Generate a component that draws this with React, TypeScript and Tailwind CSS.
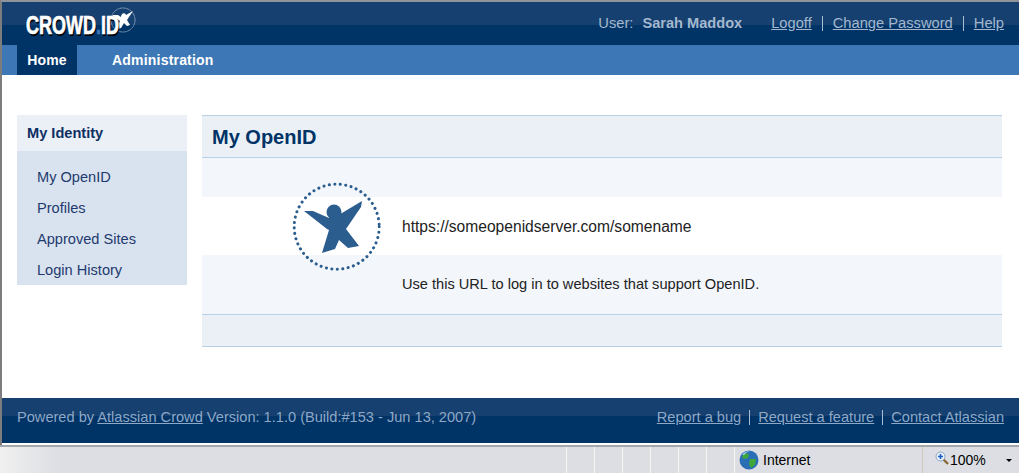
const headerBg = "bg-[linear-gradient(#15406f_0,#15406f_54%,#003366_54%,#003366_100%)]";
const footerBg = "bg-[linear-gradient(#15406f_0,#15406f_41%,#003366_41%,#003366_100%)]";

function Logo() {
	return (
		<div className="flex items-center">
			<div className="h-[26px] w-[86px] pt-[1px]">
				<span className="block origin-left scale-x-[0.72] text-[25px] leading-[26px] font-bold whitespace-nowrap text-white [-webkit-text-stroke:0.7px_#fff] [text-shadow:1.5px_1.5px_0_#000]">
					CROWD<span className="text-[#3e77b5] [-webkit-text-stroke:0.7px_#3e77b5] [text-shadow:none]">.</span>ID
				</span>
			</div>
			<svg viewBox="0 0 26 26" className="-mt-[7px] -ml-[2px] h-[26px] w-[26px]">
				<circle cx="13" cy="13" r="12" fill="none" stroke="#d5dfea" strokeWidth="0.7" strokeDasharray="1 0.4" />
				<path d="M2 8 L8 8 L11 10 C11 6 15 5 16 8 L23 4 L17 13 L20 18 L17 19 L14 16 L11 21 L7 22 L10 14 Z" fill="#fff" />
			</svg>
		</div>
	);
}

function OpenIdBadge() {
	return (
		<svg viewBox="0 0 90 90" className="absolute left-[292px] top-[182px] h-[90px] w-[90px]">
			<circle cx="44.7" cy="44.7" r="42.5" fill="none" stroke="#2b5d8f" strokeWidth="3" strokeLinecap="round" strokeDasharray="0.1 5.4" />
			<circle cx="42" cy="30" r="7.5" fill="#2b5d8f" />
			<path
				d="M12 29 L21 29 L37 36 L50 31 L70 19 L69 25 L54 47 L67 64 L56 66 L47 58 L43 67 L30 71 L37 48 L35 47 Z"
				fill="#2b5d8f"
			/>
		</svg>
	);
}

function Globe() {
	return (
		<svg viewBox="0 0 20 20" className="h-5 w-5">
			<circle cx="10" cy="10" r="9.5" fill="#2a6fb5" />
			<path d="M5 3 L10 4 L9 8 L5 9 L3 7 Z M11 9 L17 9 L16 15 L12 18 L10 14 Z" fill="#3fa63a" />
			<path d="M3 5 Q6 1 11 1 Q7 2 5 5 Z" fill="#a9d0f0" />
		</svg>
	);
}

function Zoom() {
	return (
		<svg viewBox="0 0 14 14" className="-mt-[4px] h-[14px] w-[14px]">
			<path d="M8 8 L13 13" stroke="#8a6a3a" strokeWidth="2.4" />
			<circle cx="5.5" cy="5.5" r="4.5" fill="#e8f1fb" stroke="#8aa4c0" />
			<path d="M3 5.5 H8 M5.5 3 V8" stroke="#1f5fc0" strokeWidth="1.6" />
		</svg>
	);
}

function HeadSep() {
	return <span className="mx-[10px] h-[15px] w-px bg-[#a9bdd3]" />;
}

function FootSep() {
	return <span className="mx-[8px] h-[15px] w-px bg-[#a9bdd3]" />;
}

export default function App() {
	const sideLinks = ["My OpenID", "Profiles", "Approved Sites", "Login History"];
	return (
		<div className="relative flex h-[473px] w-[1019px] flex-col overflow-hidden bg-white text-[14.6px] [font-family:'Liberation_Sans',Arial,sans-serif]">
			<div className="flex h-[445px] flex-col border-t-2 border-l-2 border-t-[#8f949b] border-l-[#7d7d7d]">
				<header className={`flex h-[43px] items-center justify-between pr-[15px] pl-[24px] ${headerBg}`}>
					<Logo />
					<div className="flex items-center text-[14.7px] text-[#a3b8cf]">
						<span className="mr-[9px]">User:</span>
						<span className="mr-[29px] text-[14.6px] font-bold">Sarah Maddox</span>
						<a className="underline">Logoff</a>
						<HeadSep />
						<a className="underline">Change Password</a>
						<HeadSep />
						<a className="underline">Help</a>
					</div>
				</header>
				<nav className="flex h-[30px] bg-[#3e77b5] pl-[15px] text-[14px] font-bold tracking-[0.2px] text-white">
					<a className="flex w-[60px] items-center justify-center bg-[#003366]">Home</a>
					<a className="ml-[35px] flex items-center">Administration</a>
				</nav>
				<main className="flex flex-1 gap-[15px] pt-[40px] pr-[17px] pl-[15px]">
					<aside className="w-[170px]">
						<h2 className="flex h-[36px] items-center bg-[#ebf0f7] pt-[2px] pl-[10px] font-bold text-[#0f2f63]">My Identity</h2>
						<ul className="flex h-[134px] flex-col gap-[10px] bg-[#d8e3ef] pt-[16px] pl-[20px] text-[#1f3a6e]">
							{sideLinks.map((link) => (
								<li key={link} className="h-[21px] leading-[21px]">{link}</li>
							))}
						</ul>
					</aside>
					<section className="flex-1">
						<h1 className="flex h-[43px] items-center border-y border-[#b9cfe6] bg-[#ebf0f7] pl-[10px] text-[20px] font-bold text-[#003366]">
							My OpenID
						</h1>
						<div className="h-[39px] bg-[#f3f6fa]" />
						<div className="flex h-[58px] items-center pt-[2px] pl-[200px] text-[15.6px] text-[#222]">https://someopenidserver.com/somename</div>
						<div className="flex h-[59px] items-center bg-[#f3f6fa] pl-[200px] text-[#222]">
							Use this URL to log in to websites that support OpenID.
						</div>
						<div className="h-[33px] border-y border-[#b9cfe6] bg-[#ebf0f7]" />
					</section>
				</main>
				<footer className={`mb-[2px] flex h-[45px] items-center justify-between px-[15px] pb-[6px] text-[#8ea8c6] ${footerBg}`}>
					<div>
						Powered by <a className="underline">Atlassian Crowd</a> Version: 1.1.0 (Build:#153 - Jun 13, 2007)
					</div>
					<div className="flex items-center">
						<a className="underline">Report a bug</a>
						<FootSep />
						<a className="underline">Request a feature</a>
						<FootSep />
						<a className="underline">Contact Atlassian</a>
					</div>
				</footer>
			</div>
			<div className="flex h-[28px] items-center border-t-2 border-t-[#a5a7ab] bg-[linear-gradient(90deg,#f0f0f0,#dcdee3_60px)] text-[14px] text-black">
				<div className="ml-[566px] flex h-full">
					{[0, 1, 2, 3, 4, 5].map((i) => (
						<span key={i} className="h-full w-[28px] border-l border-l-[#f8f8f0]" />
					))}
				</div>
				<div className="flex h-full w-[189px] items-center gap-[4px] border-r border-r-[#cfc9b8] border-l border-l-[#f8f8f0] pl-[4px]">
					<Globe />
					<span>Internet</span>
				</div>
				<div className="ml-[12px] flex items-center gap-[1px]">
					<Zoom />
					<span>100%</span>
				</div>
				<span className="ml-[20px] h-0 w-0 border-x-[3px] border-t-[3px] border-x-transparent border-t-black" />
			</div>
			<OpenIdBadge />
		</div>
	);
}
